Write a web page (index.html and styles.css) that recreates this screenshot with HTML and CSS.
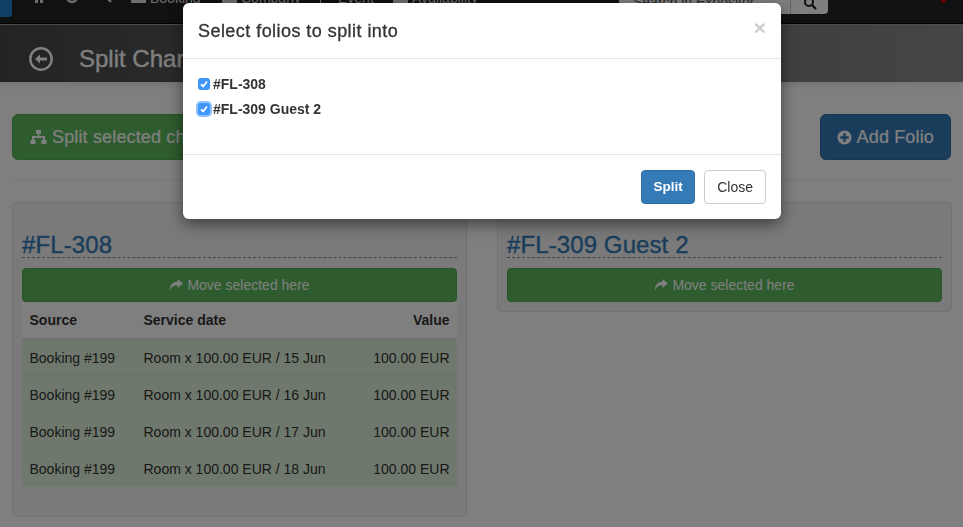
FILE: index.html
```html
<!DOCTYPE html>
<html lang="en">
<head>
    <meta charset="UTF-8">
    <title>Split Charges</title>
    <link rel="stylesheet" href="styles.css">
</head>
<body>
    <div class="page">
        <nav class="navbar">
            <div class="brand"></div>
            <div class="nav-icons">
                <svg width="14" height="14" viewBox="0 0 14 14"><path d="M1 7 7 1l6 6h-2v6H8V9H6v4H3V7z" fill="#ddd"/></svg>
                <svg width="14" height="14" viewBox="0 0 14 14"><circle cx="7" cy="7" r="5" fill="none" stroke="#ddd" stroke-width="2.4"/></svg>
                <svg width="14" height="14" viewBox="0 0 14 14"><circle cx="6" cy="5" r="4" fill="none" stroke="#ddd" stroke-width="2"/><path d="m9 8 4 4" stroke="#ddd" stroke-width="2.4"/></svg>
            </div>
            <div class="nav-links">
                <span class="nav-link link-booking"><i class="nav-glyph"></i>Booking</span>
                <span class="nav-link link-company"><i class="nav-glyph"></i>Company</span>
                <span class="nav-sep"></span>
                <span class="nav-link link-event">Event</span>
                <span class="nav-link link-avail"><i class="nav-glyph"></i>Availability</span>
            </div>
            <div class="nav-search">
                <div class="search-input">Search in Expositor...</div>
                <div class="search-btn">
                    <svg width="14" height="14" viewBox="0 0 14 14"><circle cx="6" cy="2" r="4" fill="none" stroke="#222" stroke-width="2"/><path d="m9 5 4 4" stroke="#222" stroke-width="2.4"/></svg>
                </div>
            </div>
            <div class="nav-alert"></div>
        </nav>

        <header class="title-bar">
            <svg class="back-icon" width="24" height="24" viewBox="0 0 24 24">
                <circle cx="12" cy="12" r="10.7" fill="none" stroke="currentColor" stroke-width="2.4"/>
                <path d="M6 12 11 7.500v3h7v3h-7v3z" fill="currentColor"/>
            </svg>
            <h1>Split Charges</h1>
        </header>

        <main class="content">
            <div class="toolbar">
                <button class="btn btn-lg btn-green" type="button">
                    <svg width="19" height="16" viewBox="0 0 19 16"><path d="M7 1h5v4h-1.800v2H16v4h1.500v4h-5v-4H14V9H5v2h1.500v4h-5v-4H3V7h5.800V5H7z" fill="currentColor"/></svg>
                    Split selected charges
                </button>
                <button class="btn btn-lg btn-blue" type="button">
                    <svg width="15" height="15" viewBox="0 0 16 16"><circle cx="8" cy="8" r="7.500" fill="currentColor"/><path d="M6.700 3.500h2.600v3.200h3.200v2.600H9.300v3.200H6.700V9.300H3.500V6.700h3.200z" fill="#337ab7"/></svg>
                    Add Folio
                </button>
            </div>
            <hr class="divider">
            <div class="folios">
                <section class="folio">
                    <h2 class="folio-title">#FL-308</h2>
                    <button class="btn btn-green btn-move" type="button">
                        <svg width="14" height="12" viewBox="0 0 14 12"><path d="M8.500 0 14 4.500 8.500 9V6.300C5 6.300 2.500 7.200 1 11.500.500 6.500 3 3 8.500 2.700z" fill="currentColor"/></svg>
                        Move selected here
                    </button>
                    <table class="charges">
                        <thead>
                            <tr><th>Source</th><th>Service date</th><th class="num">Value</th></tr>
                        </thead>
                        <tbody>
                            <tr><td>Booking #199</td><td>Room x 100.00 EUR / 15 Jun</td><td class="num">100.00 EUR</td></tr>
                            <tr><td>Booking #199</td><td>Room x 100.00 EUR / 16 Jun</td><td class="num">100.00 EUR</td></tr>
                            <tr><td>Booking #199</td><td>Room x 100.00 EUR / 17 Jun</td><td class="num">100.00 EUR</td></tr>
                            <tr><td>Booking #199</td><td>Room x 100.00 EUR / 18 Jun</td><td class="num">100.00 EUR</td></tr>
                        </tbody>
                    </table>
                </section>
                <section class="folio folio-empty">
                    <h2 class="folio-title">#FL-309 Guest 2</h2>
                    <button class="btn btn-green btn-move" type="button">
                        <svg width="14" height="12" viewBox="0 0 14 12"><path d="M8.500 0 14 4.500 8.500 9V6.300C5 6.300 2.500 7.200 1 11.500.500 6.500 3 3 8.500 2.700z" fill="currentColor"/></svg>
                        Move selected here
                    </button>
                </section>
            </div>
        </main>
    </div>

    <div class="backdrop"></div>

    <div class="modal">
        <div class="modal-header">
            <h4>Select folios to split into</h4>
            <span class="close">×</span>
        </div>
        <div class="modal-body">
            <label class="check">
                <span class="box"><svg width="12" height="12" viewBox="0 0 12 12"><path d="m3 6.300 2.200 2.200L9 3.500" fill="none" stroke="#fff" stroke-width="1.800"/></svg></span>
                #FL-308
            </label>
            <label class="check">
                <span class="box box-focus"><svg width="12" height="12" viewBox="0 0 12 12"><path d="m3 6.300 2.200 2.200L9 3.500" fill="none" stroke="#fff" stroke-width="1.800"/></svg></span>
                #FL-309 Guest 2
            </label>
        </div>
        <div class="modal-footer">
            <button class="btn btn-primary" type="button">Split</button>
            <button class="btn btn-default" type="button">Close</button>
        </div>
    </div>
</body>
</html>
```

FILE: styles.css
```css
* {
    box-sizing: border-box;
}

html, body {
    height: 100%;
}

body {
    margin: 0;
    font-family: "Liberation Sans", Arial, sans-serif;
    font-size: 14px;
    color: #333;
    background-color: #fff;
    overflow: hidden;
}

.page {
    height: 527px;
    overflow: hidden;
}

/* top nav, scrolled partly out of the window */
.navbar {
    height: 24px;
    display: flex;
    align-items: flex-start;
    background-color: #222;
    border-bottom: 1px solid #000;
    position: relative;
    overflow: hidden;
}

.brand {
    flex: none;
    width: 12px;
    height: 17px;
    background-color: #1f7fc4;
    border-radius: 0 0 3px 0;
}

.nav-icons {
    display: flex;
    gap: 19px;
    margin: -10px 0 0 20px;
}

.nav-links {
    display: flex;
    color: #ddd;
    margin: -10px 0 0 19px;
    white-space: nowrap;
}

.nav-link {
    display: flex;
    gap: 4px;
}

.nav-glyph {
    width: 15px;
    height: 13px;
    background-color: #ddd;
}

.link-booking {
    width: 91px;
}

.link-company {
    width: 98px;
}

.nav-sep {
    width: 1px;
    height: 14px;
    margin-right: 17px;
    background-color: #ddd;
}

.link-event {
    width: 55px;
}

.nav-search {
    display: flex;
    margin-left: auto;
    margin-right: 135px;
    height: 14px;
}

.search-input {
    width: 171px;
    background-color: #fff;
    color: #555;
    font-size: 14px;
    line-height: 4px;
    padding-left: 14px;
    overflow: hidden;
}

.search-btn {
    width: 38px;
    background-color: #fff;
    border-left: 1px solid #ccc;
    border-radius: 0 0 4px 0;
    text-align: center;
    line-height: 0;
}

.nav-alert {
    position: absolute;
    top: -6px;
    right: 19px;
    width: 4px;
    height: 9px;
    background-color: #d00;
    transform: rotate(-35deg);
}

.title-bar {
    height: 58px;
    display: flex;
    align-items: center;
    padding: 10px 0 0 29px;
    color: #fff;
    background: linear-gradient(to right, #474747, #8c8c8c);
    border-top: 1px solid #999;
    box-shadow: 0 2px 6px rgba(0, 0, 0, 0.12);
}

.back-icon {
    flex: none;
}

.title-bar h1 {
    margin: 0 0 0 26px;
    font-size: 24px;
    font-weight: 400;
    -webkit-text-stroke: 0.3px #fff;
}

.content {
    padding: 32px 11px 0 12px;
}

.toolbar {
    display: flex;
    justify-content: space-between;
    margin-right: 1px;
}

.btn {
    display: inline-flex;
    align-items: center;
    justify-content: center;
    gap: 5px;
    font-family: inherit;
    font-size: 14px;
    border: 1px solid transparent;
    border-radius: 4px;
    padding: 6px 12px;
    line-height: 20px;
    color: #fff;
}

.btn-lg {
    height: 46px;
    font-size: 18px;
    letter-spacing: 0.15px;
    border-radius: 6px;
    padding: 0 16px;
    gap: 4px;
    -webkit-text-stroke: 0.2px #fff;
}

.btn-green {
    background-color: #5cb85c;
    border-color: #4cae4c;
}

.btn-blue {
    background-color: #337ab7;
    border-color: #2e6da4;
    gap: 5px;
}

.divider {
    margin: 20px 0 21px;
    border: 0;
    border-top: 1px solid #eee;
}

.folios {
    display: grid;
    grid-template-columns: 455px 455px;
    gap: 30px;
    align-items: start;
}

.folio {
    border: 1px solid #e3e3e3;
    border-radius: 4px;
    background-color: #f5f5f5;
    padding: 9px;
    height: 315px;
}

.folio-empty {
    height: 110px;
}

.folio-title {
    margin: 17px 0 10px;
    height: 29px;
    font-size: 24px;
    line-height: 31px;
    font-weight: 400;
    letter-spacing: 0.1px;
    color: #337ab7;
    border-bottom: 1px dashed #888;
    -webkit-text-stroke: 0.4px #337ab7;
}

.btn-move {
    width: 100%;
    height: 34px;
    gap: 4px;
}

.charges {
    width: 100%;
    border-collapse: collapse;
}

.charges th,
.charges td {
    text-align: left;
    padding: 8px 7.5px;
    line-height: 20px;
}

.charges th {
    height: 36px;
    background-color: #fff;
    border-bottom: 1px solid #ddd;
}

.charges td {
    height: 37px;
    padding-top: 9px;
    padding-bottom: 7px;
    background-color: #dff0d8;
    border-top: 1px solid #d6e5cf;
}

.charges th:first-child {
    width: 114px;
}

.charges .num {
    text-align: right;
}

.backdrop {
    position: fixed;
    inset: 0;
    background-color: #000;
    opacity: 0.5;
}

.modal {
    position: absolute;
    top: 3px;
    left: 183px;
    width: 598px;
    height: 216px;
    background-color: #fff;
    border-radius: 6px;
    box-shadow: 0 5px 15px rgba(0, 0, 0, 0.5);
    display: flex;
    flex-direction: column;
}

.modal-header {
    height: 56px;
    padding: 2px 15px 0;
    display: flex;
    align-items: center;
    justify-content: space-between;
    border-bottom: 1px solid #e5e5e5;
}

.modal-header h4 {
    margin: 0;
    font-size: 18px;
    font-weight: 400;
    letter-spacing: 0.45px;
    color: #333;
    -webkit-text-stroke: 0.3px #333;
}

.close {
    font-size: 21px;
    font-weight: 700;
    color: #000;
    opacity: 0.2;
    margin-top: -7px;
}

.modal-body {
    height: 96px;
    padding: 12px 15px;
    border-bottom: 1px solid #e5e5e5;
}

.check {
    display: flex;
    align-items: center;
    gap: 3px;
    height: 25px;
    font-weight: 700;
}

.box {
    width: 12px;
    height: 12px;
    border-radius: 3px;
    background-color: #3f96fb;
    display: flex;
}

.box-focus {
    box-shadow: 0 0 0 2px #8fc0fb;
}

.modal-footer {
    flex: 1;
    padding: 0 15px;
    display: flex;
    justify-content: flex-end;
    align-items: center;
    gap: 9px;
}

.btn-primary {
    width: 54px;
    padding: 6px 0;
    font-size: 13.5px;
    background-color: #337ab7;
    border-color: #2e6da4;
    font-weight: 700;
}

.btn-default {
    color: #333;
    background-color: #fff;
    border-color: #ccc;
}
```
